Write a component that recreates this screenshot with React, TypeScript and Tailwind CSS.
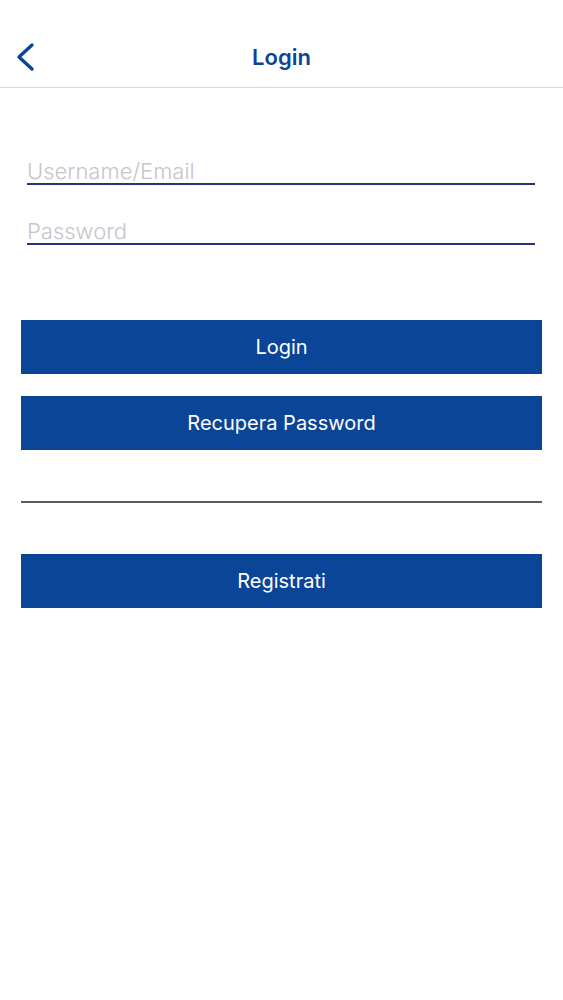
const font = { fontFamily: 'Inter, "Noto Sans", sans-serif' }

function Field({ placeholder, type = 'text' }: { placeholder: string; type?: string }) {
  return (
    <input
      type={type}
      placeholder={placeholder}
      className="h-[32px] w-full border-b-2 border-[#28337f] bg-transparent px-0 pt-[6px] text-[22px] font-light text-[#333] outline-none placeholder:text-[#c5c5cb]"
    />
  )
}

function BlueButton({ label }: { label: string }) {
  return (
    <button className="flex h-[54px] w-full items-center justify-center bg-[#0a4597] text-[20px] text-white">
      {label}
    </button>
  )
}

export default function App() {
  return (
    <div className="min-h-[1000px] w-full bg-white" style={font}>
      <header className="relative flex h-[88px] items-center justify-center border-b border-[#d8d8d8] pt-[27px]">
        <button className="absolute left-[15px] top-[42px]">
          <svg width="22" height="30" viewBox="0 0 22 30" fill="none">
            <polyline
              points="17,3 4,15 17,27"
              stroke="#0d4596"
              strokeWidth="3.4"
              strokeLinecap="round"
              strokeLinejoin="round"
            />
          </svg>
        </button>
        <h1 className="text-[22px] font-semibold text-[#0d4596]">Login</h1>
      </header>

      <div className="flex flex-col gap-[28px] pl-[27px] pr-[28px] pt-[65px]">
        <Field placeholder="Username/Email" />
        <Field placeholder="Password" type="password" />
      </div>

      <div className="flex flex-col px-[21px] pt-[75px]">
        <BlueButton label="Login" />
        <div className="mt-[22px]">
          <BlueButton label="Recupera Password" />
        </div>
        <div className="mt-[51px] h-[1.5px] bg-[#5c5c5c]" />
        <div className="mt-[51px]">
          <BlueButton label="Registrati" />
        </div>
      </div>
    </div>
  )
}
